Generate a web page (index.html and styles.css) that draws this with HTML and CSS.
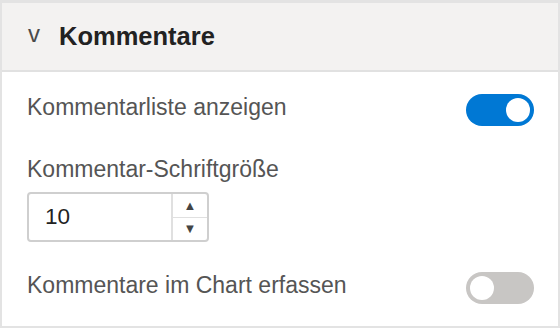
FILE: index.html
```html
<!DOCTYPE html>
<html lang="de">
<head>
  <meta charset="UTF-8" />
  <title>Kommentare</title>
  <link rel="stylesheet" href="styles.css">
</head>
<body>
  <section class="panel">
    <div class="panel-header">
      <span class="chevron">v</span>
      <h2>Kommentare</h2>
    </div>
    <div class="panel-body">
      <div class="row">
        <span class="label">Kommentarliste anzeigen</span>
        <span class="toggle on"><span class="knob"></span></span>
      </div>
      <div class="label size-label">Kommentar-Schriftgröße</div>
      <div class="spin">
        <span class="spin-value">10</span>
        <span class="spin-buttons">
          <span class="spin-btn">▲</span>
          <span class="spin-btn">▼</span>
        </span>
      </div>
      <div class="row last-row">
        <span class="label">Kommentare im Chart erfassen</span>
        <span class="toggle"><span class="knob"></span></span>
      </div>
    </div>
  </section>
</body>
</html>
```

FILE: styles.css
```css
body {
  margin: 0;
  background: #e3e3e3;
  font-family: "Liberation Sans", Arial, sans-serif;
}
.panel {
  margin: 3px 2px 2px 2px;
  height: 323px;
  background: #fff;
}
.panel-header {
  height: 67px;
  background: #f3f2f1;
  border-bottom: 2px solid #e1e1e1;
  display: flex;
  align-items: center;
  padding-left: 26px;
}
.chevron {
  font-size: 24px;
  color: #4a4a4a;
  width: 31px;
  margin-top: -5px;
}
h2 {
  margin: 0;
  font-size: 25.5px;
  font-weight: bold;
  color: #222;
}
.panel-body {
  padding: 22px 24px 0 25px;
}
.row {
  display: flex;
  align-items: flex-start;
  justify-content: space-between;
  height: 32px;
}
.label {
  font-size: 23px;
  color: #555;
  line-height: 26px;
}
.size-label {
  margin-top: 30px;
}
.toggle {
  width: 68px;
  height: 32px;
  border-radius: 16px;
  background: #c8c6c4;
  display: flex;
  align-items: center;
  padding: 0 4px;
  box-sizing: border-box;
}
.toggle.on {
  background: #0078d4;
  justify-content: flex-end;
}
.knob {
  width: 24px;
  height: 24px;
  border-radius: 50%;
  background: #fff;
}
.spin {
  margin-top: 10px;
  width: 182px;
  height: 50px;
  box-sizing: border-box;
  border: 2px solid #cfcfcf;
  border-radius: 4px;
  display: flex;
}
.spin-value {
  flex: 1;
  display: flex;
  align-items: center;
  padding-left: 16px;
  font-size: 22.5px;
  color: #222;
}
.spin-buttons {
  width: 34px;
  border-left: 2px solid #e0e0e0;
  display: flex;
  flex-direction: column;
}
.spin-btn {
  flex: 1;
  display: flex;
  align-items: center;
  justify-content: center;
  font-size: 13px;
  color: #444;
}
.spin-btn + .spin-btn {
  border-top: 1px solid #e0e0e0;
}
.last-row {
  margin-top: 30px;
}
```
